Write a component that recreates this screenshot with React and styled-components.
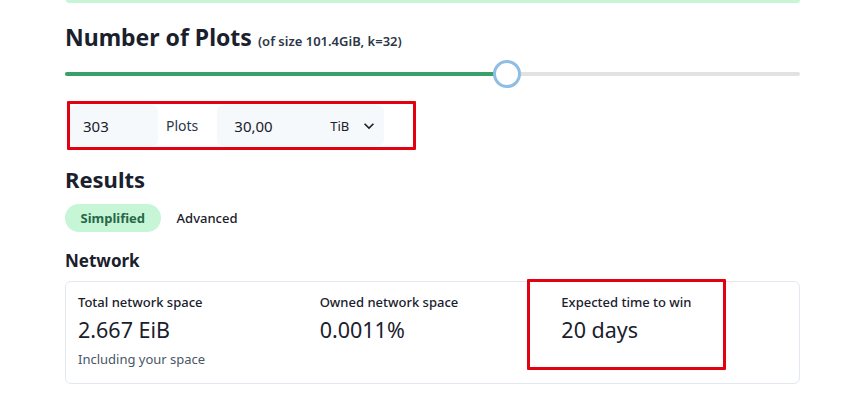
import React from 'react';
import styled, { createGlobalStyle } from 'styled-components';

const GlobalStyle = createGlobalStyle`
  body {
    margin: 0;
    background: #ffffff;
    font-family: 'Noto Sans', 'Open Sans', sans-serif;
    color: #1a202c;
  }
`;

const Page = styled.div`
  width: 850px;
  height: 417px;
  overflow: hidden;
`;

const TopCard = styled.div`
  margin-left: 66px;
  width: 734px;
  height: 3px;
  background: #c6f6d5;
  border-radius: 0 0 6px 6px;
`;

const Content = styled.div`
  padding: 0 50px 0 65px;
`;

const Heading = styled.h2`
  margin: 20px 0 0;
  font-size: 23px;
  font-weight: 700;
  line-height: 28px;
  display: flex;
  align-items: baseline;
  gap: 6px;
`;

const SubNote = styled.span`
  font-size: 13px;
  font-weight: 600;
  color: #2d3748;
`;

const Slider = styled.div`
  position: relative;
  height: 30px;
  margin-top: 4px;
  display: flex;
  align-items: center;
`;

const Track = styled.div`
  width: 100%;
  height: 4px;
  background: #e2e2e2;
  border-radius: 2px;
  overflow: hidden;
`;

const Filled = styled.div`
  height: 100%;
  background: #38a169;
`;

const Thumb = styled.div`
  position: absolute;
  top: 1px;
  width: 22px;
  height: 22px;
  border-radius: 50%;
  background: #fff;
  border: 3px solid #8fbde3;
  transform: translateX(-50%);
`;

const Annotated = styled.div`
  border: 3px solid #e3000f;
  border-radius: 1px;
  box-sizing: border-box;
`;

const InputRow = styled(Annotated)`
  margin-top: 12px;
  margin-left: 2px;
  width: 349px;
  padding: 1px 0;
  display: flex;
  align-items: center;
`;

const Field = styled.div`
  height: 41px;
  width: ${p => p.$w}px;
  background: #f6f9fc;
  border-radius: 6px;
  display: flex;
  align-items: center;
  padding: 0 5px 0 ${p => p.$pl}px;
  box-sizing: border-box;
  font-size: 15px;
  color: #1a202c;
`;

const Unit = styled.span`
  font-size: 14px;
  color: #2d3748;
  margin: 0 19px 0 8px;
`;

const SelectValue = styled.span`
  margin-left: auto;
  font-size: 13px;
  display: flex;
  align-items: center;
  gap: 10px;
`;

const Chevron = () => (
  <svg width="20" height="20" viewBox="0 0 24 24">
    <path fill="#1a202c" d="M16.59 8.59L12 13.17 7.41 8.59 6 10l6 6 6-6z" />
  </svg>
);

const SectionTitle = styled.h2`
  margin: ${p => p.$mt}px 0 0;
  font-size: ${p => p.$size}px;
  font-weight: 700;
  line-height: 1.2;
`;

const Tabs = styled.div`
  display: flex;
  align-items: center;
  gap: 16px;
  margin-top: 12px;
`;

const Tab = styled.div`
  height: 28px;
  padding: 0 ${p => (p.$active ? 15.5 : 0)}px;
  border-radius: 14px;
  display: flex;
  align-items: center;
  font-size: 13px;
  font-weight: ${p => (p.$active ? 700 : 500)};
  background: ${p => (p.$active ? '#c6f6d5' : 'transparent')};
  color: ${p => (p.$active ? '#276749' : '#1a202c')};
`;

const StatCard = styled.div`
  position: relative;
  margin-top: 9px;
  width: 735px;
  height: 103px;
  box-sizing: border-box;
  border: 1px solid #e2e8f0;
  border-radius: 6px;
  padding: 10px 12px;
  display: grid;
  grid-template-columns: repeat(3, 1fr);
  column-gap: 16px;
`;

const Stat = styled.div`
  position: relative;
  display: flex;
  flex-direction: column;
`;

const StatLabel = styled.div`
  font-size: 13px;
  font-weight: 500;
  line-height: 20px;
`;

const StatValue = styled.div`
  font-size: 21.5px;
  line-height: 32px;
  margin-top: 2px;
`;

const StatHelp = styled.div`
  font-size: 13px;
  color: #4a5568;
  line-height: 20px;
  margin-top: 3px;
`;

const Highlight = styled(Annotated)`
  position: absolute;
  left: -34px;
  top: -13px;
  width: 199px;
  height: 91px;
`;

const stats = [
  { label: 'Total network space', value: '2.667 EiB', help: 'Including your space' },
  { label: 'Owned network space', value: '0.0011%' },
  { label: 'Expected time to win', value: '20 days', marked: true },
];

export default function App() {
  const percent = 60.1;
  return (
    <Page>
      <GlobalStyle />
      <TopCard />
      <Content>
        <Heading>
          Number of Plots <SubNote>(of size 101.4GiB, k=32)</SubNote>
        </Heading>
        <Slider>
          <Track>
            <Filled style={{ width: `${percent}%` }} />
          </Track>
          <Thumb style={{ left: `${percent}%` }} />
        </Slider>
        <InputRow>
          <Field $w={88} $pl={13}>303</Field>
          <Unit>Plots</Unit>
          <Field $w={167} $pl={17}>
            30,00
            <SelectValue>
              TiB <Chevron />
            </SelectValue>
          </Field>
        </InputRow>
        <SectionTitle $mt={16} $size={22}>Results</SectionTitle>
        <Tabs>
          <Tab $active>Simplified</Tab>
          <Tab>Advanced</Tab>
        </Tabs>
        <SectionTitle $mt={19} $size={17}>Network</SectionTitle>
        <StatCard>
          {stats.map(s => (
            <Stat key={s.label}>
              {s.marked && <Highlight />}
              <StatLabel>{s.label}</StatLabel>
              <StatValue>{s.value}</StatValue>
              {s.help && <StatHelp>{s.help}</StatHelp>}
            </Stat>
          ))}
        </StatCard>
      </Content>
    </Page>
  );
}
